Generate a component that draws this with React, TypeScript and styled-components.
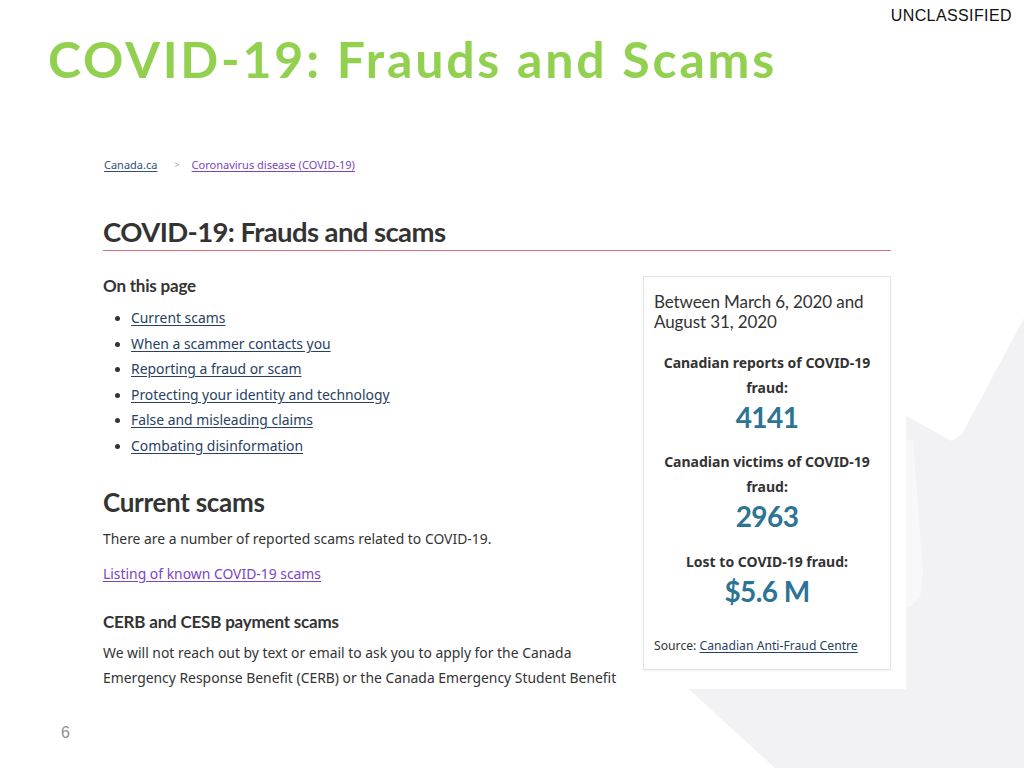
import React from "react";
import styled, { createGlobalStyle } from "styled-components";

const Global = createGlobalStyle`
  html, body { margin: 0; padding: 0; background: #ffffff; }
  body { font-family: "Liberation Sans", Arial, sans-serif; }
`;

const Slide = styled.div`
  position: relative;
  width: 1024px;
  height: 768px;
  overflow: hidden;
  background: #ffffff;
  display: flex;
  flex-direction: column;
`;

const Leaf = styled.svg`
  position: absolute;
  left: 0;
  top: 0;
  width: 1024px;
  height: 768px;
  z-index: 0;
`;

const TopBar = styled.div`
  position: relative;
  z-index: 1;
  display: flex;
  justify-content: flex-end;
  padding: 6px 12px 0 0;
  height: 22px;
`;

const Classification = styled.span`
  font-family: "Liberation Sans", Arial, sans-serif;
  font-size: 16px;
  line-height: 20px;
  color: #111;
  letter-spacing: 0.4px;
`;

const SlideTitle = styled.h1`
  position: relative;
  z-index: 1;
  margin: 1px 0 0 48px;
  font-family: "Century Gothic", "URW Gothic", Lato, sans-serif;
  font-weight: 700;
  font-size: 50px;
  line-height: 60px;
  color: #92d050;
  letter-spacing: 2.8px;
  white-space: nowrap;
`;

const Shot = styled.div`
  position: relative;
  z-index: 1;
  margin: 50px 0 0 98px;
  width: 808px;
  height: 550px;
  box-sizing: border-box;
  background: #ffffff;
  overflow: hidden;
  padding: 18px 15px 0 5px;
  font-family: "Noto Sans", sans-serif;
  color: #333;
`;

const Breadcrumb = styled.div`
  display: flex;
  align-items: center;
  gap: 11px;
  font-size: 11px;
  line-height: 16px;
  padding-left: 1px;
`;

const Crumb = styled.a<{ $visited?: boolean }>`
  color: ${(p) => (p.$visited ? "#7a45c4" : "#335075")};
  text-decoration: underline;
  text-underline-offset: 2px;
`;

const Sep = styled.span`
  color: #aaa;
  font-size: 9px;
  padding: 0 1px 0 6px;
`;

const PageHeading = styled.h2`
  margin: 42px 0 0;
  padding-bottom: 1px;
  border-bottom: 1px solid #d3707c;
  font-family: Lato, sans-serif;
  font-weight: 700;
  font-size: 27.5px;
  line-height: 34px;
  color: #333;
  letter-spacing: -0.6px;
`;

const Columns = styled.div`
  display: grid;
  grid-template-columns: 1fr 248px;
  gap: 15px;
`;

const MainCol = styled.div`
  display: flex;
  flex-direction: column;
`;

const SubHeading = styled.h3<{ $mt: number }>`
  margin: ${(p) => p.$mt}px 0 0;
  font-family: Lato, sans-serif;
  font-weight: 700;
  font-size: 17px;
  line-height: 22px;
  color: #333;
  letter-spacing: -0.2px;
`;

const TocList = styled.ul`
  margin: 8px 0 0;
  padding: 0 0 0 28px;
  list-style: disc;
  font-size: 13.9px;
  line-height: 25.6px;
  li::marker { color: #333; font-size: 13px; }
`;

const TocLink = styled.a`
  color: #284162;
  text-decoration: underline;
  text-underline-offset: 2px;
`;

const SectionHeading = styled.h3`
  margin: 28px 0 0;
  font-family: Lato, sans-serif;
  font-weight: 700;
  font-size: 26px;
  line-height: 30px;
  color: #333;
  letter-spacing: -0.3px;
`;

const Para = styled.p<{ $mt: number }>`
  margin: ${(p) => p.$mt}px 0 0;
  font-size: 13.9px;
  line-height: 25.5px;
  color: #333;
`;

const VisitedLink = styled.a`
  color: #7a45c4;
  text-decoration: underline;
  text-underline-offset: 2px;
`;

const Panel = styled.aside`
  margin-top: 25px;
  border: 1px solid #e3e3e3;
  box-shadow: 0 1px 2px rgba(0, 0, 0, 0.06);
  padding: 15px 10px 13px;
  height: 394px;
  box-sizing: border-box;
  display: flex;
  flex-direction: column;
`;

const PanelTitle = styled.div`
  font-family: Lato, sans-serif;
  font-size: 17px;
  line-height: 20px;
  color: #333;
  letter-spacing: -0.1px;
`;

const Stat = styled.div<{ $mt: number }>`
  margin-top: ${(p) => p.$mt}px;
  text-align: center;
  display: flex;
  flex-direction: column;
  align-items: center;
`;

const StatLabel = styled.div`
  font-family: "Noto Sans", sans-serif;
  font-weight: 700;
  font-size: 14px;
  line-height: 25px;
  color: #333;
`;

const StatValue = styled.div`
  font-family: Lato, sans-serif;
  font-weight: 700;
  font-size: 28px;
  line-height: 34px;
  color: #2d7394;
  letter-spacing: -0.6px;
`;

const Source = styled.div`
  margin-top: auto;
  font-size: 12.2px;
  line-height: 20px;
  color: #333;
`;

const Footer = styled.div`
  position: relative;
  z-index: 1;
  margin: 35px 0 0 61px;
  font-family: "Liberation Sans", Arial, sans-serif;
  font-size: 16px;
  line-height: 18px;
  color: #8f8f8f;
`;

const tocItems = [
  "Current scams",
  "When a scammer contacts you",
  "Reporting a fraud or scam",
  "Protecting your identity and technology",
  "False and misleading claims",
  "Combating disinformation",
];

export default function App() {
  return (
    <>
      <Global />
      <Slide>
        <Leaf viewBox="0 0 1024 768" aria-hidden="true">
          <polygon
            fill="#f2f2f5"
            points="1024,318 962,434 952,441 906,416 800,520 682,683 775,768 1024,768"
          />
          <polygon
            fill="#f8f8fa"
            points="906,440 913,440 923,573 920,598 910,607 906,607"
          />
        </Leaf>
        <TopBar>
          <Classification>UNCLASSIFIED</Classification>
        </TopBar>
        <SlideTitle>COVID-19: Frauds and Scams</SlideTitle>
        <Shot>
          <Breadcrumb>
            <Crumb>Canada.ca</Crumb>
            <Sep>&gt;</Sep>
            <Crumb $visited>Coronavirus disease (COVID-19)</Crumb>
          </Breadcrumb>
          <PageHeading>COVID-19: Frauds and scams</PageHeading>
          <Columns>
            <MainCol>
              <SubHeading $mt={24}>On this page</SubHeading>
              <TocList>
                {tocItems.map((t) => (
                  <li key={t}>
                    <TocLink>{t}</TocLink>
                  </li>
                ))}
              </TocList>
              <SectionHeading>Current scams</SectionHeading>
              <Para $mt={9}>There are a number of reported scams related to COVID-19.</Para>
              <Para $mt={10}>
                <VisitedLink>Listing of known COVID-19 scams</VisitedLink>
              </Para>
              <SubHeading $mt={24}>CERB and CESB payment scams</SubHeading>
              <Para $mt={7}>
                We will not reach out by text or email to ask you to apply for the Canada
                Emergency Response Benefit (CERB) or the Canada Emergency Student Benefit
              </Para>
            </MainCol>
            <Panel>
              <PanelTitle>
                Between March 6, 2020 and
                <br />
                August 31, 2020
              </PanelTitle>
              <Stat $mt={18}>
                <StatLabel>
                  Canadian reports of COVID-19
                  <br />
                  fraud:
                </StatLabel>
                <StatValue>4141</StatValue>
              </Stat>
              <Stat $mt={15}>
                <StatLabel>
                  Canadian victims of COVID-19
                  <br />
                  fraud:
                </StatLabel>
                <StatValue>2963</StatValue>
              </Stat>
              <Stat $mt={16}>
                <StatLabel>Lost to COVID-19 fraud:</StatLabel>
                <StatValue>$5.6 M</StatValue>
              </Stat>
              <Source>
                Source: <TocLink>Canadian Anti-Fraud Centre</TocLink>
              </Source>
            </Panel>
          </Columns>
        </Shot>
        <Footer>6</Footer>
      </Slide>
    </>
  );
}
